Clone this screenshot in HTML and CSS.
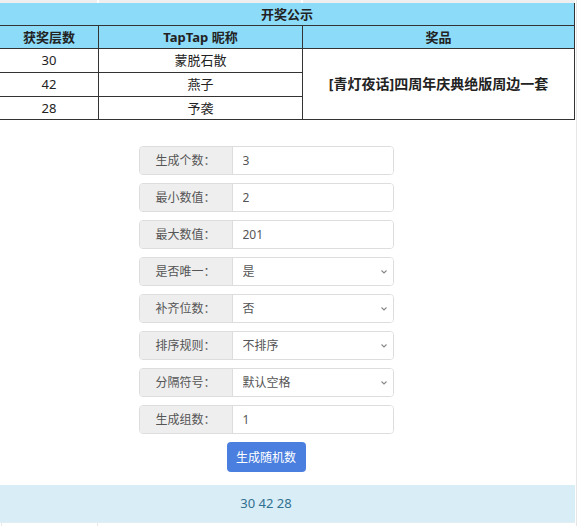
FILE: index.html
```html
<!DOCTYPE html>
<html lang="zh-CN">
<head>
    <meta charset="UTF-8">
    <meta name="viewport" content="width=device-width, initial-scale=1.0">
    <title>开奖公示 - 随机数生成</title>
    <link rel="stylesheet" href="styles.css">
</head>
<body>
    <div class="page">
        <div class="content">
            <div class="top-strip"></div>

            <table class="prize-table">
                <colgroup>
                    <col class="col-floor">
                    <col class="col-name">
                    <col class="col-prize">
                </colgroup>
                <tr class="title-row">
                    <td colspan="3">开奖公示</td>
                </tr>
                <tr class="head-row">
                    <td>获奖层数</td>
                    <td>TapTap 昵称</td>
                    <td>奖品</td>
                </tr>
                <tr>
                    <td>30</td>
                    <td>蒙脱石散</td>
                    <td class="prize" rowspan="3">[青灯夜话]四周年庆典绝版周边一套</td>
                </tr>
                <tr>
                    <td>42</td>
                    <td>燕子</td>
                </tr>
                <tr class="last-row">
                    <td>28</td>
                    <td>予袭</td>
                </tr>
            </table>

            <div class="tool">
                <form class="gen-form" id="gen-form">
                    <div class="field">
                        <span class="field-label">生成个数：</span>
                        <input type="text" value="3">
                    </div>
                    <div class="field">
                        <span class="field-label">最小数值：</span>
                        <input type="text" value="2">
                    </div>
                    <div class="field">
                        <span class="field-label">最大数值：</span>
                        <input type="text" value="201">
                    </div>
                    <div class="field">
                        <span class="field-label">是否唯一：</span>
                        <div class="select-wrap">
                            <select>
                                <option>是</option>
                                <option>否</option>
                            </select>
                            <svg class="chevron" viewBox="0 0 6 4" width="6" height="4"><path d="M0.5 0.5l2.5 2.5 2.5-2.5" fill="none" stroke="#888" stroke-width="1.1"/></svg>
                        </div>
                    </div>
                    <div class="field">
                        <span class="field-label">补齐位数：</span>
                        <div class="select-wrap">
                            <select>
                                <option>否</option>
                                <option>是</option>
                            </select>
                            <svg class="chevron" viewBox="0 0 6 4" width="6" height="4"><path d="M0.5 0.5l2.5 2.5 2.5-2.5" fill="none" stroke="#888" stroke-width="1.1"/></svg>
                        </div>
                    </div>
                    <div class="field">
                        <span class="field-label">排序规则：</span>
                        <div class="select-wrap">
                            <select>
                                <option>不排序</option>
                                <option>从小到大</option>
                                <option>从大到小</option>
                            </select>
                            <svg class="chevron" viewBox="0 0 6 4" width="6" height="4"><path d="M0.5 0.5l2.5 2.5 2.5-2.5" fill="none" stroke="#888" stroke-width="1.1"/></svg>
                        </div>
                    </div>
                    <div class="field">
                        <span class="field-label">分隔符号：</span>
                        <div class="select-wrap">
                            <select>
                                <option>默认空格</option>
                                <option>逗号</option>
                                <option>换行</option>
                            </select>
                            <svg class="chevron" viewBox="0 0 6 4" width="6" height="4"><path d="M0.5 0.5l2.5 2.5 2.5-2.5" fill="none" stroke="#888" stroke-width="1.1"/></svg>
                        </div>
                    </div>
                    <div class="field">
                        <span class="field-label">生成组数：</span>
                        <input type="text" value="1">
                    </div>
                    <button type="submit" class="gen-btn">生成随机数</button>
                </form>
            </div>

            <div class="result"><span id="result">30 42 28</span></div>
            <div class="bottom-strip"></div>
        </div>
        <div class="side-strip"></div>
    </div>
</body>
</html>
```

FILE: styles.css
```css
* {
    margin: 0;
    padding: 0;
    box-sizing: border-box;
}

body {
    background: #fff;
    color: #222;
    font-family: "Noto Sans", "Noto Sans CJK SC", sans-serif;
    font-size: 13px;
}

.page {
    display: flex;
    width: 578px;
    min-height: 526px;
    overflow: hidden;
}

.content {
    width: 575px;
    flex-shrink: 0;
}

.side-strip {
    width: 3px;
    background: linear-gradient(to right, transparent 1px, #e6e6e6 1px, #e6e6e6 2px, transparent 2px);
}

.top-strip {
    height: 3px;
    background:
        linear-gradient(to right, transparent 97px, #fff 97px, #fff 99px, transparent 99px),
        linear-gradient(to right, transparent 301px, #fff 301px, #fff 303px, transparent 303px),
        #efefef;
}

/* prize table */
.prize-table {
    width: 576px;
    margin-left: -1px;
    border-collapse: collapse;
    table-layout: fixed;
}

.col-floor { width: 99px; }
.col-name { width: 204px; }

.prize-table td {
    border: 1px solid #333;
    text-align: center;
    height: 24px;
    line-height: 18px;
    padding: 0;
}

.title-row td {
    border-top: none;
    height: 22px;
    background: #8cdcf9;
    font-weight: bold;
}

.head-row td {
    height: 23px;
    background: #8cdcf9;
    font-weight: bold;
}

.last-row td {
    height: 23px;
}

.prize-table .prize {
    font-size: 14px;
    font-weight: bold;
}

/* generator form */
.tool {
    padding: 26px 43px 0 0;
}

.gen-form {
    width: 255px;
    margin: 0 auto;
}

.field {
    display: flex;
    height: 29px;
    margin-bottom: 8px;
    border: 1px solid #ddd;
    border-radius: 4px;
    overflow: hidden;
    background: #fff;
}

.field-label {
    width: 93px;
    flex-shrink: 0;
    background: #eee;
    border-right: 1px solid #ddd;
    color: #555;
    font-size: 12px;
    line-height: 27px;
    text-align: center;
}

.field input,
.field select {
    width: 100%;
    height: 100%;
    border: none;
    outline: none;
    padding: 0 10px;
    font-family: "Noto Sans", "Noto Sans CJK SC", sans-serif;
    font-size: 12px;
    color: #555;
    background: #fff;
}

.select-wrap {
    position: relative;
    flex: 1;
}

.field select {
    appearance: none;
    -webkit-appearance: none;
}

.chevron {
    position: absolute;
    right: 6px;
    top: 12px;
    pointer-events: none;
}

.gen-btn {
    display: block;
    width: 79px;
    height: 30px;
    margin: 0 auto;
    border: none;
    border-radius: 4px;
    background: #4a7fe0;
    color: #fff;
    font-family: "Noto Sans", "Noto Sans CJK SC", sans-serif;
    font-size: 12px;
    cursor: pointer;
}

/* result */
.result {
    margin-top: 13px;
    height: 37px;
    padding-right: 43px;
    background: #d9edf7;
    color: #31708f;
    font-size: 13px;
    line-height: 37px;
    text-align: center;
}

.bottom-strip {
    height: 4px;
    border-top: 1px solid #e3eef4;
    background:
        linear-gradient(to right, transparent 1px, #e8e8e8 1px, #e8e8e8 2px, transparent 2px),
        linear-gradient(to right, transparent 97px, #e8e8e8 97px, #e8e8e8 98px, transparent 98px);
}
```
